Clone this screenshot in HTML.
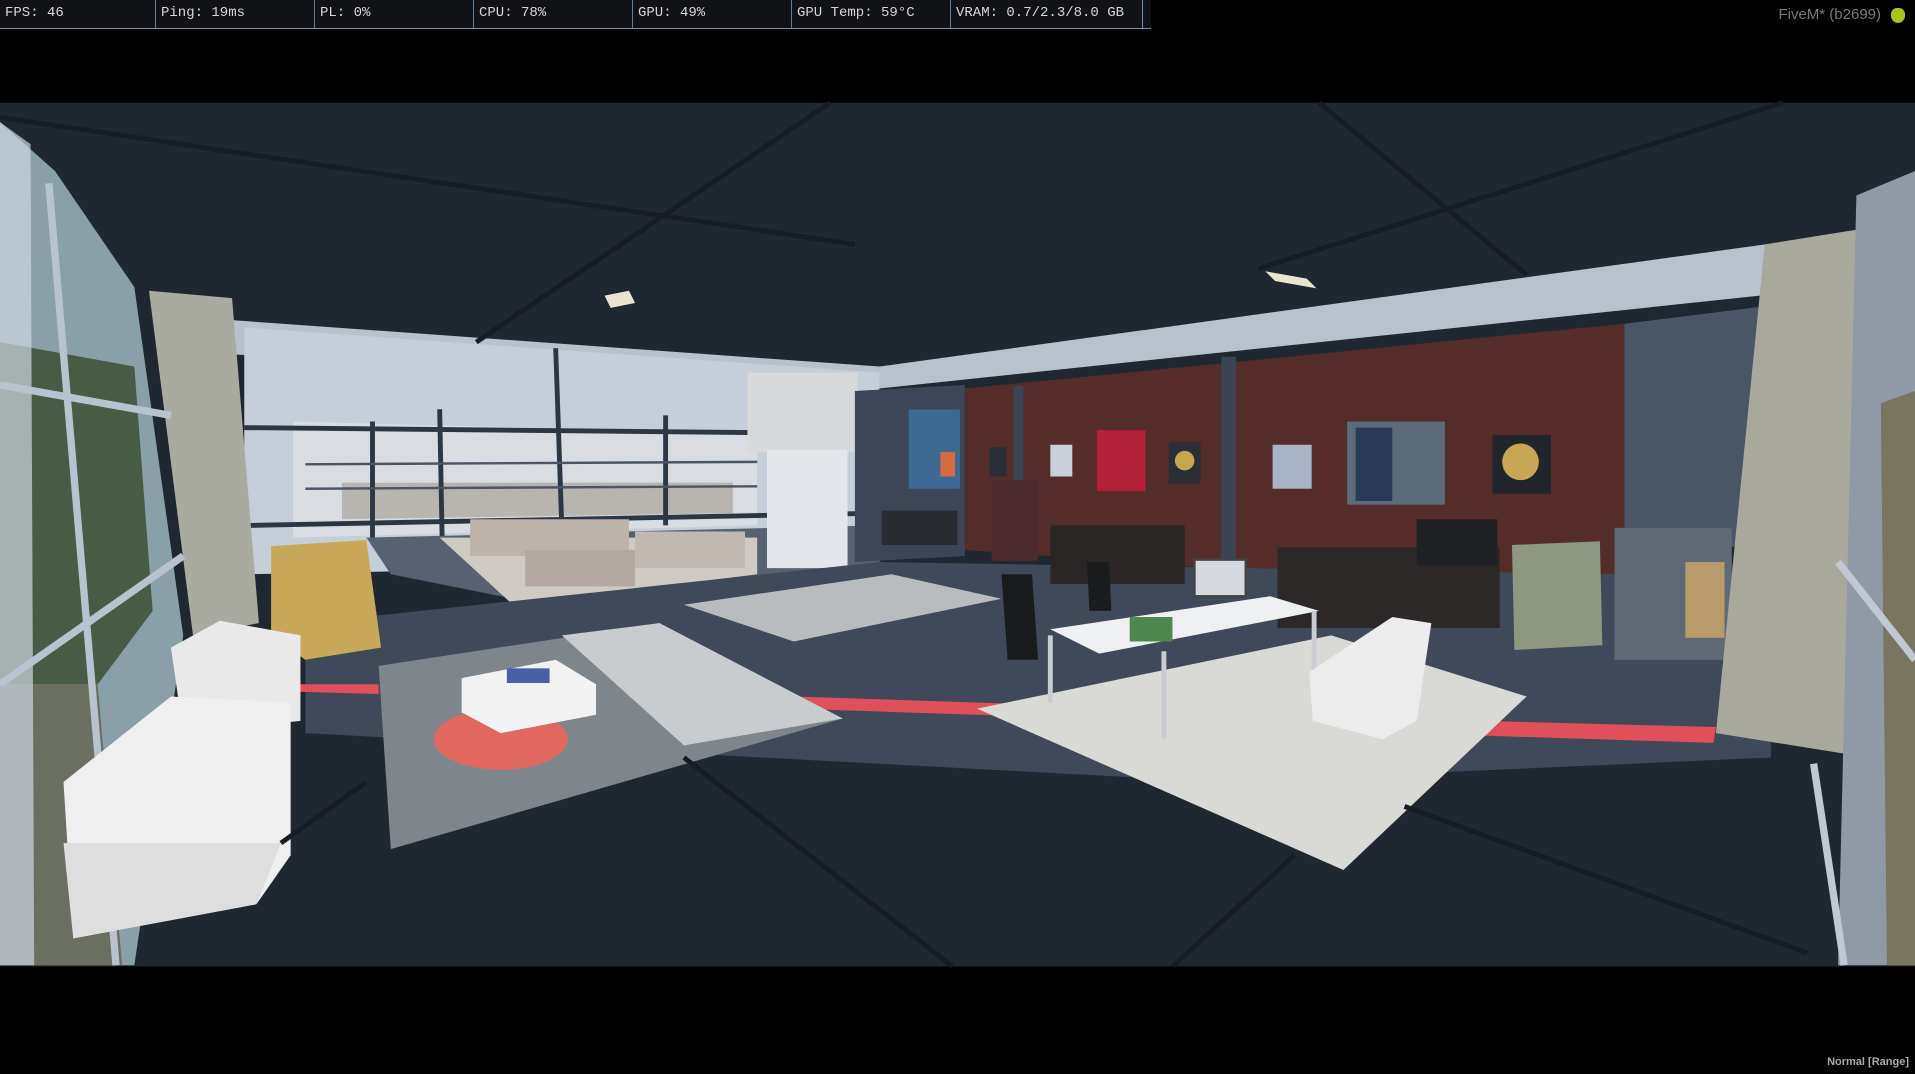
<!DOCTYPE html>
<html><head><meta charset="utf-8"><style>
html,body{margin:0;padding:0;background:#000;width:1915px;height:1074px;overflow:hidden;position:relative;font-family:"Liberation Mono",monospace}
#bar{position:absolute;left:0;top:0;height:28px;width:1151px;background:#111216;border-bottom:1px solid #6f8fb5;display:flex}
#bar div{width:159px;border-right:1px solid #5f7b9c;color:#d6d6d6;font-size:14px;line-height:27px;padding-left:5px;box-sizing:border-box}
#bar div:first-child{width:156px}
#bar div:last-child{border-right:1px solid #6f8fb5;width:192px}
#five{position:absolute;right:34px;top:6px;color:#7a7a7a;font:15px "Liberation Sans",sans-serif}
#leaf{position:absolute;right:10px;top:8px;width:14px;height:15px;background:#a6c51d;border-radius:50% 50% 60% 60%}
#norm{position:absolute;right:6px;bottom:6px;color:#aaa;font:bold 11px "Liberation Sans",sans-serif}
svg{position:absolute;left:0;top:0}
</style></head><body>
<svg width="1915" height="1074" viewBox="0 0 1568 879" preserveAspectRatio="none">
<rect x="0" y="84" width="1568" height="707" fill="#1f2830"/>
<!-- back band/ceiling edge -->
<polygon points="190,262 720,300 1460,198 1460,240 720,318 190,290" fill="#b9c1cd"/>
<!-- back left glass wall sky -->
<polygon points="200,268 720,305 720,460 200,470" fill="#c6ced9"/>
<polygon points="240,345 620,355 620,430 240,440" fill="#d9dde2"/>
<polygon points="280,395 600,395 600,420 280,425" fill="#b8b4b0"/>
<!-- frames -->
<g stroke="#2c3744" stroke-width="4" fill="none">
<line x1="200" y1="350" x2="720" y2="355"/><line x1="205" y1="430" x2="720" y2="420"/>
<line x1="455" y1="285" x2="462" y2="490"/><line x1="305" y1="345" x2="305" y2="440"/>
<line x1="360" y1="335" x2="362" y2="440"/><line x1="545" y1="340" x2="545" y2="430"/>
</g>
<g stroke="#4a5566" stroke-width="2"><line x1="250" y1="380" x2="620" y2="378"/><line x1="250" y1="400" x2="620" y2="398"/></g>
<!-- interior floor beyond glass -->
<polygon points="300,440 720,430 720,470 470,500 320,470" fill="#57616f"/>
<polygon points="360,440 620,440 620,470 420,495" fill="#cfcac4"/>
<rect x="385" y="425" width="130" height="30" fill="#bdb3ab"/><rect x="430" y="450" width="90" height="30" fill="#b3a9a2"/><rect x="520" y="435" width="90" height="30" fill="#c1b8b1"/>
<!-- door -->
<rect x="612" y="305" width="90" height="65" fill="#d8d9da"/>
<rect x="628" y="368" width="66" height="97" fill="#e3e6ea"/>
<!-- right side dark wall -->
<polygon points="700,320 790,315 790,455 700,460" fill="#3c4656"/>
<!-- wood wall -->
<polygon points="790,318 1330,265 1330,490 790,450" fill="#542c29"/>
<rect x="1000" y="292" width="12" height="170" fill="#3b4452"/>
<rect x="830" y="316" width="8" height="130" fill="#3b4452"/>
<!-- pictures -->
<rect x="744" y="335" width="42" height="65" fill="#3c6a92"/><rect x="770" y="370" width="12" height="20" fill="#d66a40"/>
<rect x="898" y="352" width="40" height="50" fill="#b2203a"/>
<rect x="810" y="366" width="14" height="24" fill="#2b2e36"/><rect x="860" y="364" width="18" height="26" fill="#c9d0da"/>
<rect x="957" y="362" width="26" height="34" fill="#2b2e36"/><circle cx="970" cy="377" r="8" fill="#c5a84c"/>
<rect x="1042" y="364" width="32" height="36" fill="#a9b5c7"/>
<rect x="1103" y="345" width="80" height="68" fill="#5b6b7a"/><rect x="1110" y="350" width="30" height="60" fill="#2a3a55"/>
<rect x="1222" y="356" width="48" height="48" fill="#22262c"/><circle cx="1245" cy="378" r="15" fill="#c8a654"/>
<!-- right dark wall part -->
<polygon points="1330,265 1450,250 1450,450 1330,440" fill="#4a5566"/>
<!-- floor mid -->
<polygon points="250,510 720,460 1330,470 1450,520 1450,620 1000,640 250,600" fill="#3f4959"/>
<!-- furniture back wall -->
<rect x="860" y="430" width="110" height="48" fill="#2b2626"/>
<rect x="812" y="393" width="38" height="66" fill="#4b2a30"/>
<rect x="722" y="418" width="62" height="28" fill="#282b30"/>
<rect x="1046" y="448" width="182" height="66" fill="#2d2828"/>
<rect x="1160" y="425" width="66" height="38" fill="#1e2024"/>
<polygon points="1238,446 1310,443 1312,528 1240,532" fill="#8e9880"/>
<rect x="1322" y="432" width="96" height="108" fill="#606a75"/><rect x="1380" y="460" width="32" height="62" fill="#b89c6b"/>
<!-- red stripes -->
<polygon points="240,560 310,560 310,568 240,566" fill="#e0505a"/>
<polygon points="650,570 830,576 830,586 650,580" fill="#e0505a"/>
<polygon points="1215,590 1405,595 1403,608 1212,602" fill="#e0505a"/>
<!-- rugs -->
<polygon points="560,495 730,470 820,490 650,525" fill="#b9bcbf"/>
<polygon points="310,545 540,510 690,588 320,695" fill="#7e868c"/>
<polygon points="460,520 540,510 690,588 560,610" fill="#c8cccf"/>
<ellipse cx="410" cy="605" rx="55" ry="25" fill="#e0685e"/>
<polygon points="800,580 1090,520 1250,570 1100,712" fill="#d9d9d6"/>
<!-- coffee table -->
<polygon points="378,555 455,540 488,560 488,585 410,600 378,583" fill="#f2f2f2"/>
<rect x="415" y="547" width="35" height="12" fill="#4a5fa8"/>
<!-- desk -->
<polygon points="860,515 1040,488 1080,500 900,535" fill="#eef0f2"/>
<g stroke="#c9ccd1" stroke-width="4"><line x1="860" y1="520" x2="860" y2="575"/><line x1="953" y1="533" x2="953" y2="605"/><line x1="1076" y1="500" x2="1076" y2="550"/></g>
<rect x="978" y="458" width="42" height="30" fill="#d6dae0" stroke="#444" stroke-width="2"/>
<rect x="925" y="505" width="35" height="20" fill="#4e8650"/>
<!-- chairs -->
<polygon points="820,470 845,470 850,540 825,540" fill="#1a1b1d"/>
<polygon points="890,460 908,460 910,500 892,500" fill="#1a1b1d"/>
<polygon points="1072,550 1140,505 1172,510 1160,590 1132,605 1075,590" fill="#ececec"/>
<!-- gold pedestal -->
<polygon points="222,447 300,442 312,530 250,540 222,520" fill="#c8a95a"/>
<!-- left pillar -->
<polygon points="122,238 190,244 212,510 158,520" fill="#a9aaa0"/>
<!-- left window -->
<polygon points="0,100 45,140 110,235 150,520 110,790 0,790" fill="#8aa0a8"/>
<polygon points="0,280 110,300 125,500 80,560 0,560" fill="#475b45"/>
<polygon points="0,560 80,560 100,790 0,790" fill="#6a6f62"/>
<polygon points="0,100 25,118 28,790 0,790" fill="#cfd6e0" opacity=".7"/>
<g stroke="#b9c2cf" stroke-width="6"><line x1="40" y1="150" x2="95" y2="790"/><line x1="0" y1="315" x2="140" y2="340"/><line x1="0" y1="560" x2="150" y2="455"/></g>
<!-- sofas -->
<polygon points="140,530 180,508 246,520 246,590 150,600" fill="#e9e9e9"/>
<polygon points="52,640 140,570 238,575 238,700 210,740 60,768" fill="#efefef"/>
<polygon points="52,690 60,768 210,740 230,690" fill="#dedede"/>
<!-- right pillar & window -->
<polygon points="1445,200 1520,188 1530,620 1405,600" fill="#a8a89d"/>
<polygon points="1520,160 1568,140 1568,790 1505,790" fill="#8f9aa6"/>
<polygon points="1540,330 1568,320 1568,790 1545,790" fill="#7a7560"/>
<g stroke="#c0c8d4" stroke-width="6"><line x1="1505" y1="460" x2="1568" y2="540"/><line x1="1485" y1="625" x2="1510" y2="790"/></g>
<!-- ceiling lines -->
<g stroke="#151c23" stroke-width="4">
<line x1="0" y1="96" x2="700" y2="200"/><line x1="680" y1="84" x2="390" y2="280"/>
<line x1="1080" y1="84" x2="1250" y2="225"/><line x1="1460" y1="84" x2="1030" y2="220"/>
<line x1="560" y1="620" x2="780" y2="791"/><line x1="1060" y1="700" x2="960" y2="791"/>
<line x1="1150" y1="660" x2="1480" y2="780"/><line x1="230" y1="690" x2="300" y2="640"/>
</g>
<polygon points="495,242 515,238 520,248 500,252" fill="#e8e4d0"/>
<polygon points="1036,222 1070,228 1078,236 1044,230" fill="#e8e4d0"/>
</svg>
<div id="bar"><div>FPS: 46</div><div>Ping: 19ms</div><div>PL: 0%</div><div>CPU: 78%</div><div>GPU: 49%</div><div>GPU Temp: 59°C</div><div>VRAM: 0.7/2.3/8.0 GB</div></div>
<div id="five">FiveM* (b2699)</div><div id="leaf"></div>
<div id="norm">Normal [Range]</div>
</body></html>
